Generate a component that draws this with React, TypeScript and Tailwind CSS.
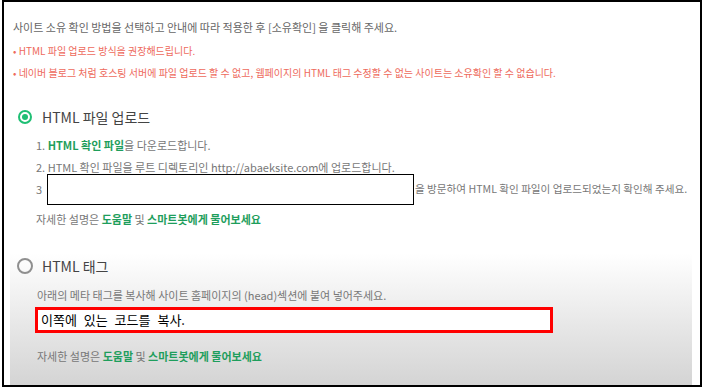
import React from "react";

function Line({ className = "", children }: { className?: string; children: React.ReactNode }) {
  return <div className={"h-[22px] leading-[22px] whitespace-nowrap " + className}>{children}</div>;
}

const G = ({ children }: { children: React.ReactNode }) => (
  <span className="text-[#1e9e5c] font-bold">{children}</span>
);

export default function App() {
  return (
    <div className="w-[705px] h-[390px] bg-white overflow-hidden font-['Noto_Sans_CJK_KR','Noto_Sans',sans-serif]">
      <div className="ml-[2px] w-[700px] h-[387px] border-2 border-black flex flex-col">
        <div className="pl-[9px] pt-[14px]">
          <Line className="text-[11px] text-[#666]">
            사이트 소유 확인 방법을 선택하고 안내에 따라 적용한 후 [소유확인] 을 클릭해 주세요.
          </Line>
          <Line className="mt-[2px] text-[10px] text-[#ee6a5c]">
            • HTML 파일 업로드 방식을 권장해드립니다.
          </Line>
          <Line className="text-[10px] text-[#ee6a5c]">
            • 네이버 블로그 처럼 호스팅 서버에 파일 업로드 할 수 없고, 웹페이지의 HTML 태그 수정할 수 없는 사이트는 소유확인 할 수 없습니다.
          </Line>
        </div>

        <div className="mt-[21px] pl-[14px] h-[24px] flex items-center gap-[10px]">
          <span className="w-[14px] h-[14px] rounded-full border-2 border-[#1fbf74] flex items-center justify-center">
            <span className="w-[6px] h-[6px] rounded-full bg-[#1fbf74]" />
          </span>
          <span className="text-[14px] text-[#444]">HTML 파일 업로드</span>
        </div>

        <div className="pl-[32px] mt-[5px] text-[11px] text-[#777]">
          <Line>
            1. <G>HTML 확인 파일</G>을 다운로드합니다.
          </Line>
          <Line>2. HTML 확인 파일을 루트 디렉토리인 http://abaeksite.com에 업로드합니다.</Line>
          <Line className="relative">
            3
            <span className="absolute left-[379px] top-0 text-[10.6px]">을 방문하여 HTML 확인 파일이 업로드되었는지 확인해 주세요.</span>
            <span className="absolute left-[11px] top-[-4px] w-[367px] h-[31px] border border-black bg-white" />
          </Line>
          <Line className="mt-[8px]">
            자세한 설명은 <G>도움말</G> 및 <G>스마트봇에게 물어보세요</G>
          </Line>
        </div>

        <div className="mt-[15px] ml-[6px] mr-[8px] flex-1 bg-gradient-to-b from-white from-[6%] to-[#d4d4d4]">
          <div className="pt-[9px] pl-[7px] h-[24px] box-content flex items-center gap-[9px]">
            <span className="w-[16px] h-[16px] rounded-full border-2 border-[#8f8f8f]" />
            <span className="text-[14px] text-[#444]">HTML 태그</span>
          </div>
          <div className="pl-[27px] text-[11px] text-[#777]">
            <Line className="mt-[6px]">
              아래의 메타 태그를 복사해 사이트 홈페이지의 (head)섹션에 붙여 넣어주세요.
            </Line>
            <div className="mt-[1px] ml-[-2px] w-[518px] h-[26px] border-[3px] border-[#ff0000] bg-white pl-[3px] text-[13px] leading-[20px] text-black [word-spacing:4px]">
              이쪽에 있는 코드를 복사.
            </div>
            <Line className="mt-[12px]">
              자세한 설명은 <G>도움말</G> 및 <G>스마트봇에게 물어보세요</G>
            </Line>
          </div>
        </div>
      </div>
    </div>
  );
}
